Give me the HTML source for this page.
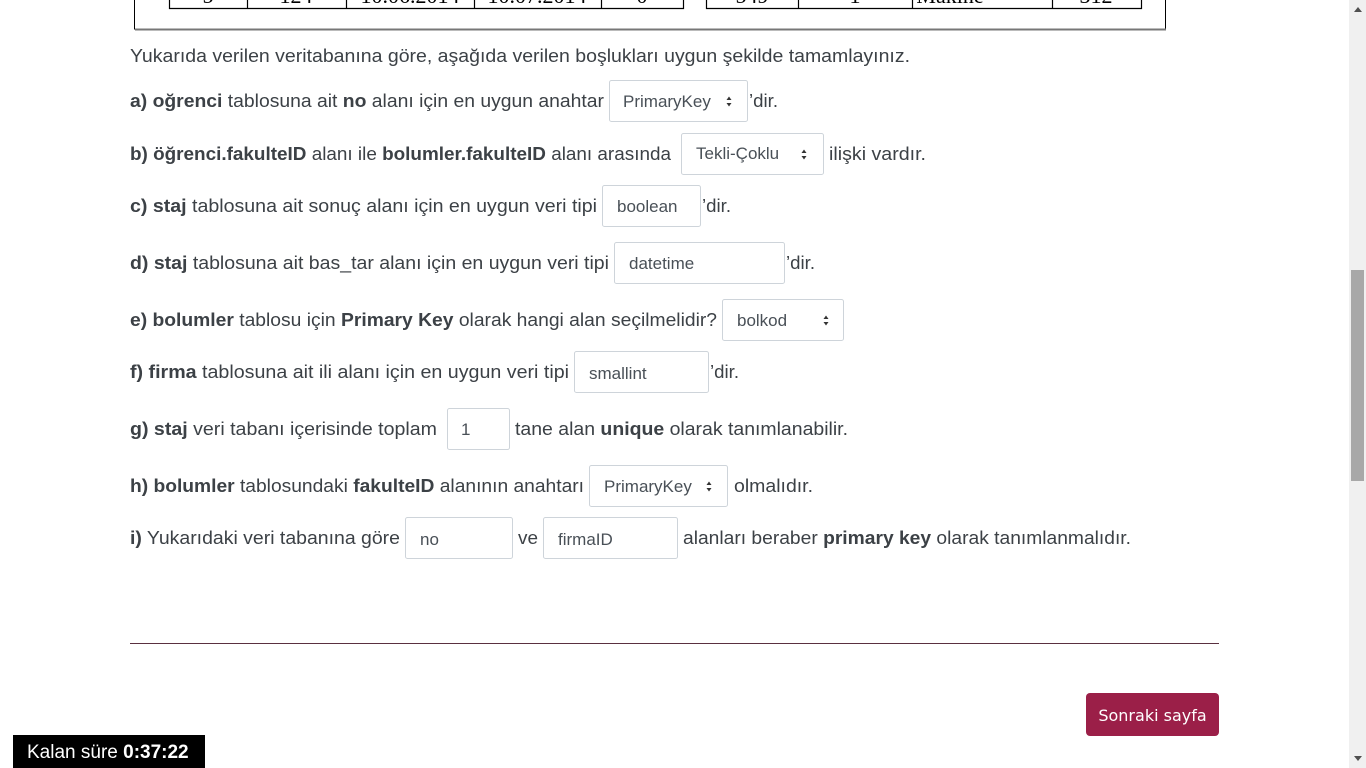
<!DOCTYPE html>
<html><head><meta charset="utf-8"><style>
html,body{margin:0;padding:0;background:#fff;width:1366px;height:768px;overflow:hidden}
svg{position:absolute;left:0;top:0}
.t{font-family:"Liberation Sans",sans-serif;font-size:18px;fill:#3c4146}
.b{font-weight:bold}
.f{font-family:"Liberation Sans",sans-serif;font-size:17px;fill:#495057}
.s{font-family:"Liberation Serif",serif;font-size:22px;fill:#000}
.box{fill:#fff;stroke:#ced4da;stroke-width:1}
</style></head><body>
<svg width="1366" height="768" viewBox="0 0 1366 768">
<rect x="134.5" y="-5" width="1031" height="34" fill="#fff" stroke="#000"/>
<line x1="135" y1="29.5" x2="1166" y2="29.5" stroke="#777" stroke-width="2"/>
<g stroke="#000" stroke-width="1.2" fill="none">
<path d="M169.5 -2V8.5H683.5V-2M247.5 -2V8.5M346.5 -2V8.5M474.5 -2V8.5M601.5 -2V8.5"/>
<path d="M706.5 -2V8.5H1141.5V-2M798.5 -2V8.5M912.5 -2V8.5M1052.5 -2V8.5"/>
</g>
<g class="s" text-anchor="middle">
<text x="208" y="3">5</text><text x="296" y="3">124</text><text x="410" y="3">10.06.2014</text><text x="537" y="3">10.07.2014</text><text x="642" y="3">0</text>
<text x="752" y="3">549</text><text x="855" y="3">1</text><text x="950" y="3">Makine</text><text x="1096" y="3">312</text>
</g>

<text class="t" x="130" y="62" textLength="780" lengthAdjust="spacingAndGlyphs">Yukarıda verilen veritabanına göre, aşağıda verilen boşlukları uygun şekilde tamamlayınız.</text>

<text class="t" x="130" y="107" textLength="474" lengthAdjust="spacingAndGlyphs"><tspan class="b">a) oğrenci</tspan> tablosuna ait <tspan class="b">no</tspan> alanı için en uygun anahtar</text>
<rect class="box" x="609.5" y="80.5" width="138" height="41" rx="2"/>
<text class="f" x="623" y="107">PrimaryKey</text>
<path d="M726.5 100l2.5-3.5 2.5 3.5zM726.5 103l2.5 3.5 2.5-3.5z" fill="#333"/>
<text class="t" x="749" y="107" textLength="29" lengthAdjust="spacingAndGlyphs">’dir.</text>

<text class="t" x="130" y="160" textLength="541" lengthAdjust="spacingAndGlyphs"><tspan class="b">b) öğrenci.fakulteID</tspan> alanı ile <tspan class="b">bolumler.fakulteID</tspan> alanı arasında</text>
<rect class="box" x="681.5" y="133.5" width="142" height="41" rx="2"/>
<text class="f" x="696" y="159">Tekli-Çoklu</text>
<path d="M801.5 153l2.5-3.5 2.5 3.5zM801.5 156l2.5 3.5 2.5-3.5z" fill="#333"/>
<text class="t" x="829" y="160" textLength="97" lengthAdjust="spacingAndGlyphs">ilişki vardır.</text>

<text class="t" x="130" y="212" textLength="467" lengthAdjust="spacingAndGlyphs"><tspan class="b">c) staj</tspan> tablosuna ait sonuç alanı için en uygun veri tipi</text>
<rect class="box" x="602.5" y="185.5" width="98" height="41" rx="2"/>
<text class="f" x="617" y="212">boolean</text>
<text class="t" x="702" y="212" textLength="29" lengthAdjust="spacingAndGlyphs">’dir.</text>

<text class="t" x="130" y="269" textLength="479" lengthAdjust="spacingAndGlyphs"><tspan class="b">d) staj</tspan> tablosuna ait bas_tar alanı için en uygun veri tipi</text>
<rect class="box" x="614.5" y="242.5" width="170" height="41" rx="2"/>
<text class="f" x="629" y="269">datetime</text>
<text class="t" x="786" y="269" textLength="29" lengthAdjust="spacingAndGlyphs">’dir.</text>

<text class="t" x="130" y="326" textLength="587" lengthAdjust="spacingAndGlyphs"><tspan class="b">e) bolumler</tspan> tablosu için <tspan class="b">Primary Key</tspan> olarak hangi alan seçilmelidir?</text>
<rect class="box" x="722.5" y="299.5" width="121" height="41" rx="2"/>
<text class="f" x="737" y="326">bolkod</text>
<path d="M823.5 319l2.5-3.5 2.5 3.5zM823.5 322l2.5 3.5 2.5-3.5z" fill="#333"/>

<text class="t" x="130" y="378" textLength="439" lengthAdjust="spacingAndGlyphs"><tspan class="b">f) firma</tspan> tablosuna ait ili alanı için en uygun veri tipi</text>
<rect class="box" x="574.5" y="351.5" width="134" height="41" rx="2"/>
<text class="f" x="589" y="379">smallint</text>
<text class="t" x="710" y="378" textLength="29" lengthAdjust="spacingAndGlyphs">’dir.</text>

<text class="t" x="130" y="435" textLength="307" lengthAdjust="spacingAndGlyphs"><tspan class="b">g) staj</tspan> veri tabanı içerisinde toplam</text>
<rect class="box" x="447.5" y="408.5" width="62" height="41" rx="2"/>
<text class="f" x="461" y="435">1</text>
<text class="t" x="515" y="435" textLength="333" lengthAdjust="spacingAndGlyphs">tane alan <tspan class="b">unique</tspan> olarak tanımlanabilir.</text>

<text class="t" x="130" y="492" textLength="454" lengthAdjust="spacingAndGlyphs"><tspan class="b">h) bolumler</tspan> tablosundaki <tspan class="b">fakulteID</tspan> alanının anahtarı</text>
<rect class="box" x="589.5" y="465.5" width="138" height="41" rx="2"/>
<text class="f" x="604" y="492">PrimaryKey</text>
<path d="M706.5 485l2.5-3.5 2.5 3.5zM706.5 488l2.5 3.5 2.5-3.5z" fill="#333"/>
<text class="t" x="734" y="492" textLength="79" lengthAdjust="spacingAndGlyphs">olmalıdır.</text>

<text class="t" x="130" y="544" textLength="270" lengthAdjust="spacingAndGlyphs"><tspan class="b">i)</tspan> Yukarıdaki veri tabanına göre</text>
<rect class="box" x="405.5" y="517.5" width="107" height="41" rx="2"/>
<text class="f" x="420" y="545">no</text>
<text class="t" x="518" y="544" textLength="20" lengthAdjust="spacingAndGlyphs">ve</text>
<rect class="box" x="543.5" y="517.5" width="134" height="41" rx="2"/>
<text class="f" x="558" y="545">firmaID</text>
<text class="t" x="683" y="544" textLength="448" lengthAdjust="spacingAndGlyphs">alanları beraber <tspan class="b">primary key</tspan> olarak tanımlanmalıdır.</text>

<line x1="130" y1="643.5" x2="1219" y2="643.5" stroke="#5a3040" stroke-width="1"/>

<rect x="1086" y="693" width="133" height="43" rx="4" fill="#9b1f48"/>
<text x="1152.5" y="721" text-anchor="middle" font-family="'DejaVu Sans','Liberation Sans',sans-serif" font-size="16" fill="#fff">Sonraki sayfa</text>

<rect x="13" y="735" width="192" height="33" fill="#000"/>
<text x="27" y="758" font-family="'Liberation Sans',sans-serif" font-size="19" fill="#fff">Kalan süre <tspan font-weight="bold">0:37:22</tspan></text>

<rect x="1349" y="0" width="17" height="768" fill="#f0f0f0"/>
<rect x="1351" y="270" width="13" height="211" fill="#a8a8a8"/>
<path d="M1354 12l4-5 4 5z" fill="#505050"/>
<path d="M1354 756l4 5 4-5z" fill="#505050"/>
</svg>
</body></html>
